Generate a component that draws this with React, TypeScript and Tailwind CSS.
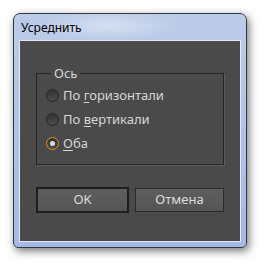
import React, { useState } from "react";

type Option = { id: string; before: string; key: string; after: string };

// Варианты выравнивания
const options: Option[] = [
  { id: "h", before: "По ", key: "г", after: "оризонтали" },
  { id: "v", before: "По ", key: "в", after: "ертикали" },
  { id: "b", before: "", key: "О", after: "ба" },
];

const font = { fontFamily: '"Noto Sans", "Open Sans", sans-serif' };

const Radio: React.FC<{ checked: boolean }> = ({ checked }) => (
  <span
    className={`flex h-[13px] w-[13px] items-center justify-center rounded-full border bg-gradient-to-b from-[#333333] to-[#4e4e4e] ${
      checked ? "border-[#e48b1c]" : "border-[#252525]"
    }`}
  >
    {checked && <span className="h-[5px] w-[5px] rounded-full bg-[#dcdcdc]" />}
  </span>
);

export default function App() {
  const [value, setValue] = useState("b");

  return (
    <div className="h-[270px] w-[266px] bg-white pl-[13px] pt-[13px]" style={font}>
      {/* Окно */}
      <div className="flex h-[235px] w-[234px] flex-col rounded-t-[7px] rounded-b-[5px] border border-[#343a44] bg-gradient-to-b from-[#bccbe8] to-[#a4bae4] shadow-[2px_3px_9px_rgba(0,0,0,0.55)]">
        <div className="flex h-[26px] items-center bg-[radial-gradient(ellipse_70px_14px_at_95px_12px,#d6e0f3,transparent)] pl-[7px] pt-[2px]">
          <span className="text-[12px] text-black">Усреднить</span>
        </div>

        <div className="mx-[5px] mb-[5px] flex-1 border border-[#e4ebf7] bg-[#4a4a4a] px-[16px] pt-[25px] text-[13px] text-[#d6d6d6]">
          <fieldset className="h-[99px] border border-[#232323] shadow-[1px_1px_0_#5d5d5d] pl-[9px]">
            <legend className="ml-[5px] px-[3px] leading-[14px]">Ось</legend>
            <div className="flex flex-col gap-[7px] pt-[7px]">
              {options.map((o) => (
                <label
                  key={o.id}
                  className="flex h-[17px] cursor-default items-center gap-[4px]"
                  onClick={() => setValue(o.id)}
                >
                  <Radio checked={value === o.id} />
                  <span>
                    {o.before}
                    <span className="underline underline-offset-2">{o.key}</span>
                    {o.after}
                  </span>
                </label>
              ))}
            </div>
          </fieldset>

          <div className="mt-[22px] flex items-start gap-[6px]">
            <button className="h-[26px] w-[93px] border-2 border-[#1e1e1e] bg-gradient-to-b from-[#5e5e5e] to-[#555555] text-[13px] text-[#dcdcdc]">
              OK
            </button>
            <button className="mt-[1px] h-[24px] w-[89px] border border-[#2a2a2a] bg-gradient-to-b from-[#5e5e5e] to-[#555555] text-[13px] text-[#dcdcdc]">
              Отмена
            </button>
          </div>
        </div>
      </div>
    </div>
  );
}
